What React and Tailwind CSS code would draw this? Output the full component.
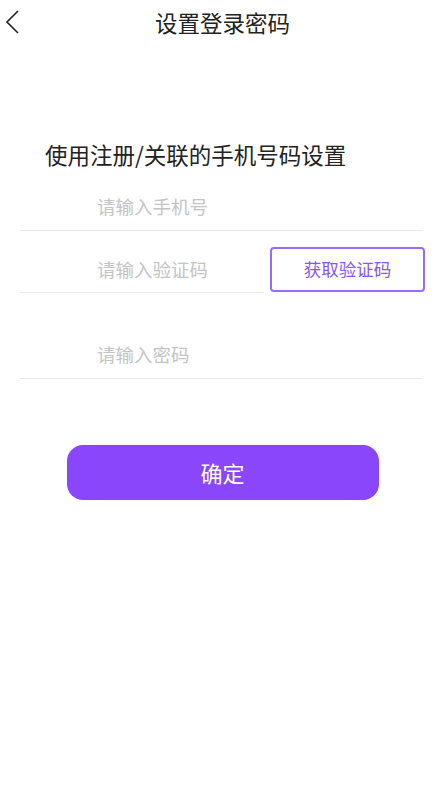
const FONT = { fontFamily: '"Noto Sans CJK SC", "Noto Sans", sans-serif' }

function BackIcon() {
  return (
    <svg width="16" height="26" viewBox="0 0 16 26" fill="none" stroke="#222" strokeWidth="1.6">
      <path d="M14 2 L3 13 L14 24" />
    </svg>
  )
}

export default function App() {
  return (
    <div className="min-h-[795px] w-[445px] bg-white text-[#222]" style={FONT}>
      <header className="relative flex h-[44px] items-center justify-center">
        <button className="absolute left-[4px] top-[9px]">
          <BackIcon />
        </button>
        <h1 className="text-[22.5px] leading-none">设置登录密码</h1>
      </header>

      <div className="pl-[20px] pr-[22px] pt-[99px]">
        <p className="pl-[25px] text-[22.5px] leading-none">使用注册/关联的手机号码设置</p>

        <div className="mt-[14px] flex h-[51px] items-center border-b border-[#e8e8e8] pl-[77px] pt-[5px]">
          <input
            placeholder="请输入手机号"
            className="w-full bg-transparent text-[18.5px] outline-none placeholder:text-[#c4c4c4]"
          />
        </div>

        <div className="flex items-end gap-[6px]">
          <div className="flex h-[62px] flex-1 items-center border-b border-[#e8e8e8] pl-[77px] pt-[18px]">
            <input
              placeholder="请输入验证码"
              className="w-full bg-transparent text-[18.5px] outline-none placeholder:text-[#c4c4c4]"
            />
          </div>
          <button className="-mr-[2px] mb-[1px] flex h-[45px] w-[155px] items-center justify-center rounded-[4px] border-2 border-[#9a6cf3] text-[17.5px] text-[#8a55f0]">
            获取验证码
          </button>
        </div>

        <div className="mt-[43px] flex h-[43px] items-center border-b border-[#e8e8e8] pl-[77px] pb-[3px]">
          <input
            placeholder="请输入密码"
            className="w-full bg-transparent text-[18.5px] outline-none placeholder:text-[#c4c4c4]"
          />
        </div>

        <div className="flex justify-center pl-[2px] pt-[66px]">
          <button className="h-[55px] w-[312px] rounded-[16px] bg-[#8a46fb] text-[22px] text-white">确定</button>
        </div>
      </div>
    </div>
  )
}
